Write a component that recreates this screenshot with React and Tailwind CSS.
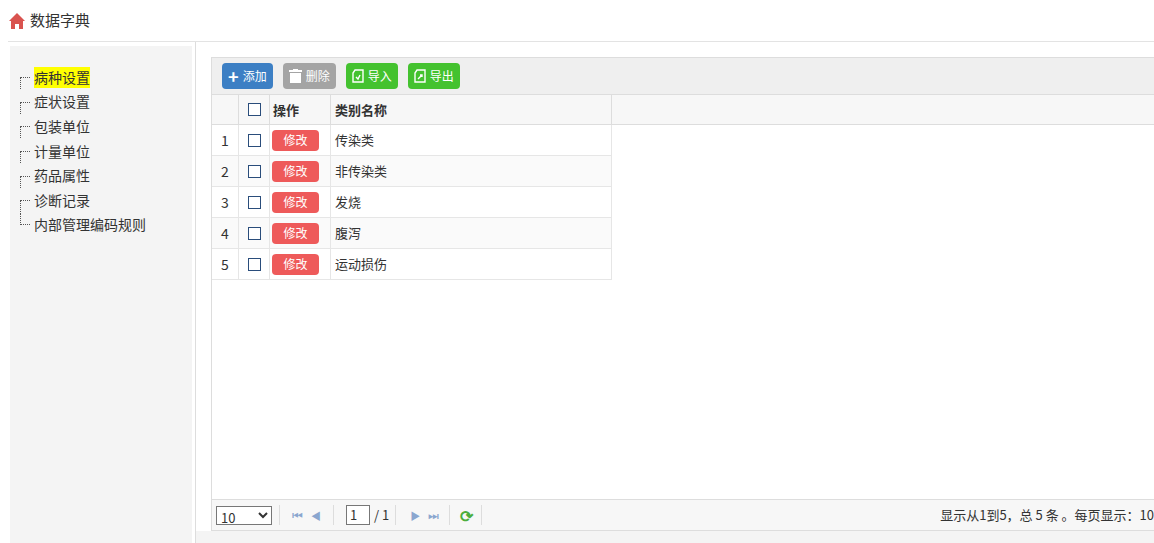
import React from "react";

const rows = ["传染类", "非传染类", "发烧", "腹泻", "运动损伤"];
const menu = ["病种设置", "症状设置", "包装单位", "计量单位", "药品属性", "诊断记录", "内部管理编码规则"];

function Btn({ color, label, icon }) {
  return (
    <button className={`flex h-[26px] items-center gap-1 rounded-sm px-[6px] text-[12px] text-white ${color}`}>
      {icon}
      {label}
    </button>
  );
}

export default function App() {
  return (
    <div className="h-[543px] w-[1154px] overflow-hidden bg-white text-[14px] text-[#333]" style={{ fontFamily: '"Microsoft YaHei","Noto Sans CJK SC",sans-serif' }}>
      <div className="ml-2 flex h-[42px] items-center border-b border-[#e3e3e3] pl-0">
        <svg width="18" height="18" viewBox="0 0 18 18"><path d="M9 1 L1 9 H3 V17 H7 V12 H11 V17 H15 V9 H17 Z" fill="#d9534f" /></svg>
        <span className="ml-[4px] text-[15px] text-[#333]">数据字典</span>
      </div>
      <div className="flex h-[501px]">
        <div className="ml-[10px] mt-[4px] w-[182px] bg-[#f4f4f4] pt-[19px]">
          {menu.map((m, i) => (
            <div key={m} className="flex h-[24.6px] items-center pl-[10px]">
              <span className={`mr-[4px] h-[12px] w-[10px] border-dotted border-[#555] ${i === menu.length - 1 ? "self-start mt-[0px] border-l border-b" : "border-l border-t mt-[12px]"}`} />
              <span className={`text-[14px] ${i === 0 ? "bg-[#ffff00]" : ""}`}>{m}</span>
            </div>
          ))}
        </div>
        <div className="ml-[3px] w-px bg-[#ddd]" />
        <div className="flex flex-1 flex-col bg-[#f4f4f4]">
          <div className="flex flex-1 flex-col bg-white pl-[15px] pt-[15px]">
            <div className="flex flex-1 flex-col border-l border-[#ddd]">
              <div className="flex h-[38px] items-center gap-[10px] border-b border-t border-[#ddd] bg-[#efefef] pl-[10px]">
                <Btn color="bg-[#3c7fc4]" label="添加" icon={<span className="text-[18px] leading-none font-bold">+</span>} />
                <Btn color="bg-[#a4a4a4]" label="删除" icon={<svg width="13" height="14" viewBox="0 0 13 14" fill="white"><rect x="0" y="1" width="13" height="2" /><rect x="4" y="0" width="5" height="2" /><rect x="1" y="4" width="11" height="10" /></svg>} />
                <Btn color="bg-[#44c22f]" label="导入" icon={<svg width="12" height="14" viewBox="0 0 12 14" fill="none" stroke="white" strokeWidth="1.4"><path d="M3 1 H11 V13 H1 V4 Z" /><path d="M4 8 L6 10 L8 6" /></svg>} />
                <Btn color="bg-[#44c22f]" label="导出" icon={<svg width="12" height="14" viewBox="0 0 12 14" fill="none" stroke="white" strokeWidth="1.4"><path d="M3 1 H11 V13 H1 V4 Z" /><path d="M4 10 L8 6 M6 6 H8 V8" /></svg>} />
              </div>
              <div className="flex h-[30px] border-b border-[#ddd] bg-[#f7f7f7] text-[13px] font-bold">
                <div className="w-[27px] border-r border-[#ddd]" />
                <div className="flex w-[31px] items-center justify-center border-r border-[#ddd]"><span className="h-[13px] w-[13px] border border-[#2a4d7b] bg-white" /></div>
                <div className="flex w-[61px] items-center border-r border-[#ddd] pl-[3px]">操作</div>
                <div className="flex w-[281px] items-center border-r border-[#ddd] pl-[4px]">类别名称</div>
              </div>
              <div className="flex-1">
                {rows.map((r, i) => (
                  <div key={r} className={`flex h-[31px] w-[400px] border-b border-r border-[#e6e6e6] text-[13px] ${i % 2 ? "bg-[#fafafa]" : ""}`}>
                    <div className="flex w-[27px] items-center justify-center border-r border-[#e6e6e6] text-[14px]">{i + 1}</div>
                    <div className="flex w-[31px] items-center justify-center border-r border-[#e6e6e6]"><span className="h-[13px] w-[13px] border border-[#2a4d7b] bg-white" /></div>
                    <div className="flex w-[61px] items-center border-r border-[#e6e6e6] pl-[2px]"><span className="flex h-[21px] w-[47px] items-center justify-center rounded-sm bg-[#ee5a5a] text-[12px] text-white">修改</span></div>
                    <div className="flex items-center pl-[4px]">{r}</div>
                  </div>
                ))}
              </div>
              <div className="flex h-[32px] items-center border-t border-b border-[#ddd] bg-[#f7f7f7] pl-[4px] text-[13px]">
                <select className="h-[19px] w-[56px] border border-[#777] bg-white text-[13px]"><option>10</option></select>
                <span className="mx-[7px] h-[20px] w-px bg-[#ddd]" />
                <span className="ml-[5px] text-[12px] text-[#8aa6cf]">⏮</span>
                <span className="ml-[8px] text-[10px] text-[#8aa6cf]">◀</span>
                <span className="mx-[12px] h-[20px] w-px bg-[#ddd]" />
                <span className="flex h-[20px] w-[24px] items-center border border-[#777] bg-white pl-[3px]">1</span>
                <span className="ml-[4px]">/ 1</span>
                <span className="mx-[6px] h-[20px] w-px bg-[#ddd]" />
                <span className="ml-[8px] text-[10px] text-[#8aa6cf]">▶</span>
                <span className="ml-[8px] text-[12px] text-[#8aa6cf]">⏭</span>
                <span className="mx-[10px] h-[20px] w-px bg-[#ddd]" />
                <span className="text-[16px] font-bold text-[#4cae3c]">⟳</span>
                <span className="ml-[8px] h-[20px] w-px bg-[#ddd]" />
                <span className="ml-auto whitespace-nowrap text-[13px]">显示从1到5，总 5 条 。每页显示：10</span>
              </div>
            </div>
          </div>
          <div className="h-[12px]" />
        </div>
      </div>
    </div>
  );
}
